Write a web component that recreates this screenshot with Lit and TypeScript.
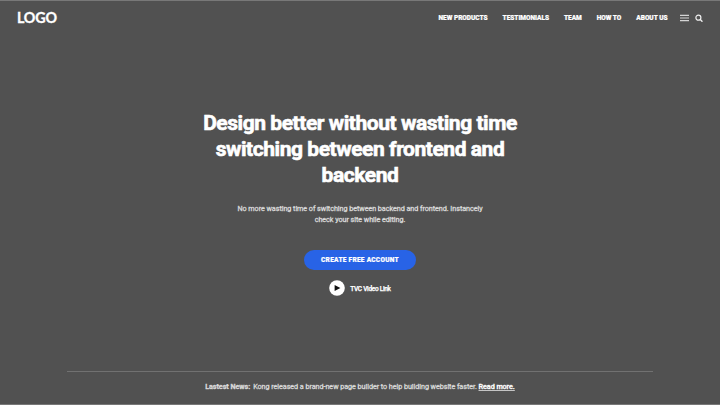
import { LitElement, html, css } from "lit";
import { customElement } from "lit/decorators.js";

@customElement("site-header")
class SiteHeader extends LitElement {
  static styles = css`
    :host { display: flex; align-items: center; height: 34px; padding: 0 17px 0 17px; color: #fff; }
    .logo { font: 700 14.3px/16px Lato, sans-serif; letter-spacing: -0.2px; flex: 1; -webkit-text-stroke: 0.3px #fff; }
    nav { display: flex; gap: 15px; font-weight: 900; font-size: 6.5px; line-height: 10px; letter-spacing: -0.02px; white-space: nowrap; -webkit-text-stroke: 0.2px #fff; }
    .icons { display: flex; align-items: center; gap: 6px; margin-left: 12.5px; }
    svg { display: block; }
  `;
  links = ["NEW PRODUCTS", "TESTIMONIALS", "TEAM", "HOW TO", "ABOUT US"];
  render() {
    return html`
      <div class="logo">LOGO</div>
      <nav>${this.links.map((l) => html`<span>${l}</span>`)}</nav>
      <div class="icons">
        <svg width="9" height="8" viewBox="0 0 9 8" stroke="#d4d4d4" stroke-width="1.2">
          <path d="M0 1.4h9M0 4h9M0 6.6h9" />
        </svg>
        <svg width="8" height="8" viewBox="0 0 8 8" fill="none" stroke="#f0f0f0">
          <circle cx="3.4" cy="3.7" r="2.5" stroke-width="1.2" />
          <path d="M5.3 5.6L7 7.3" stroke-width="1.4" stroke-linecap="round" />
        </svg>
      </div>
    `;
  }
}

@customElement("site-hero")
class SiteHero extends LitElement {
  static styles = css`
    :host { display: flex; flex-direction: column; align-items: center; padding-top: 75px; text-align: center; color: #fff; flex: 1; }
    h1 { margin: 0; width: 330px; font-weight: 700; font-size: 21px; line-height: 26px; letter-spacing: -0.45px; -webkit-text-stroke: 0.6px #fff; }
    p { margin: 15px 0 0; font-size: 7.2px; line-height: 11px; letter-spacing: -0.04px; color: #d8d8d8; white-space: nowrap; -webkit-text-stroke: 0.3px #d8d8d8; }
    .cta { margin-top: 25px; width: 112px; height: 20px; border-radius: 10px; background: #2863e6; font-size: 6.5px; line-height: 20px; font-weight: 900; letter-spacing: 0.28px; -webkit-text-stroke: 0.2px #fff; }
    .video { display: flex; align-items: center; gap: 5px; margin-top: 9.5px; font-size: 6.5px; line-height: 10px; font-weight: 500; letter-spacing: -0.29px; -webkit-text-stroke: 0.25px #fff; }
    .video span { padding-top: 2px; }
    svg { display: block; }
  `;
  render() {
    return html`
      <h1>Design better without wasting time<br />switching between frontend and<br />backend</h1>
      <p>No more wasting time of switching between backend and frontend. Instancely<br />check your site while editing.</p>
      <div class="cta">CREATE FREE ACCOUNT</div>
      <div class="video">
        <svg width="16" height="16" viewBox="0 0 16 16">
          <circle cx="8" cy="8" r="7.8" fill="#fff" />
          <path d="M5.6 4.9v6.2L11.4 8z" fill="#111" />
        </svg>
        <span>TVC Video Link</span>
      </div>
    `;
  }
}

@customElement("site-news")
class SiteNews extends LitElement {
  static styles = css`
    :host { display: block; height: 32px; margin: 0 67px; border-top: 1px solid #717171; text-align: center; font-size: 7.2px; line-height: 30px; letter-spacing: -0.045px; color: #d8d8d8; white-space: nowrap; -webkit-text-stroke: 0.3px #d8d8d8; }
    b { margin-right: 3px; font-weight: 700; }
    .more { color: #fff; font-weight: 500; text-decoration: underline 1px #c4c4c4; text-underline-offset: 1px; text-decoration-skip-ink: none; -webkit-text-stroke-color: #fff; }
  `;
  render() {
    return html`<b>Lastest News:</b><span class="copy">Kong released a brand-new page builder to help building website faster. </span><span class="more">Read more.</span>`;
  }
}

@customElement("app-root")
class AppRoot extends LitElement {
  static styles = css`
    :host { display: flex; flex-direction: column; box-sizing: border-box; width: 720px; height: 405px; overflow: hidden; background: #515151; border-top: 1px solid #787878; border-bottom: 1px solid #787878; font-family: Roboto, sans-serif; }
  `;
  render() {
    return html`<site-header></site-header><site-hero></site-hero><site-news></site-news>`;
  }
}
